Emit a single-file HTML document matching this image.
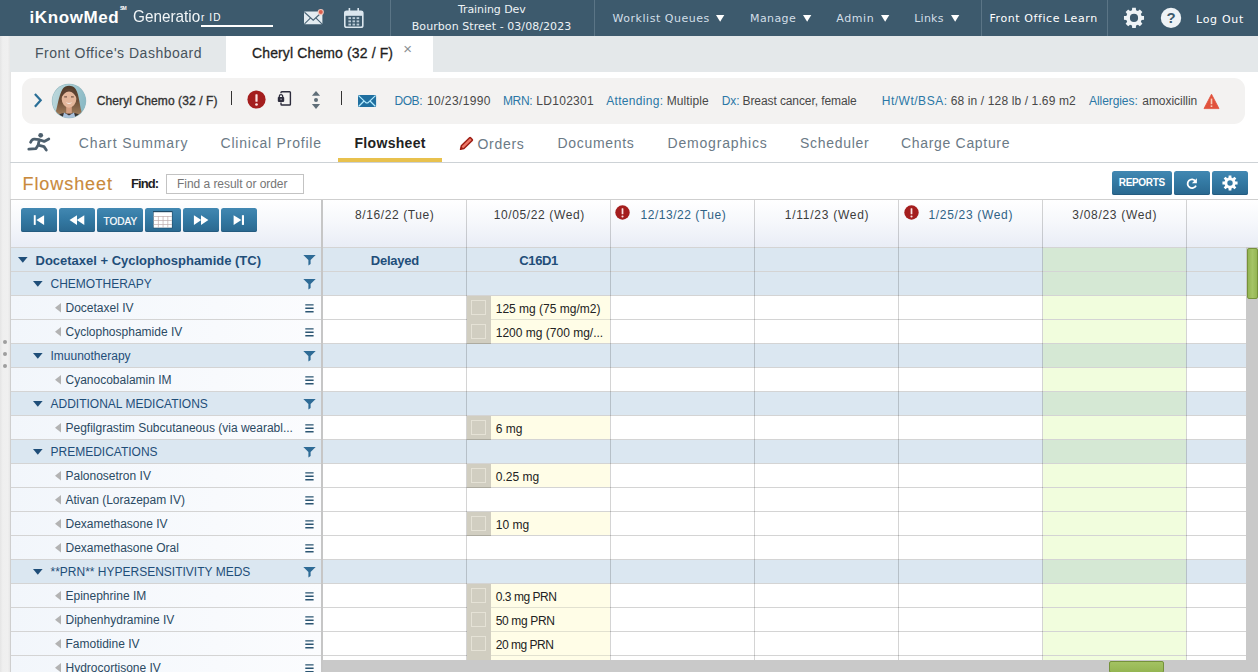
<!DOCTYPE html>
<html lang="en"><head><meta charset="utf-8"><title>iKnowMed Generation 2 - Flowsheet</title>
<style>
html,body{margin:0;padding:0;background:#fff;}
body{width:1258px;height:672px;position:relative;overflow:hidden;font-family:"Liberation Sans",Arial,sans-serif;}
.b{position:absolute;display:block;}
.t{position:absolute;white-space:pre;display:block;}
</style></head>
<body>
<div class="b" style="left:0px;top:0px;width:1258px;height:35.6px;background:#3d5a6d;"></div>
<div class="b" style="left:0px;top:35.6px;width:10.5px;height:637px;background:linear-gradient(90deg,#e5e5e5 0%,#efefef 25%,#f0f0f0 70%,#e3e3e3 100%);"></div>
<div class="b" style="left:10px;top:36px;width:1248px;height:36px;background:#e4e8ea;"></div>
<div class="b" style="left:226px;top:36px;width:207px;height:36px;background:#fff;"></div>
<div class="b" style="left:22px;top:78px;width:1223px;height:46px;background:#f3f2f1;border-radius:11px;"></div>
<div class="b" style="left:10px;top:162px;width:1248px;height:1px;background:#cdd2d6;"></div>
<div class="b" style="left:338px;top:158px;width:104px;height:4px;background:#e8c14e;"></div>
<div class="b" style="left:390px;top:0px;width:1px;height:35.6px;background:#5b7586;"></div>
<div class="b" style="left:593.5px;top:0px;width:1px;height:35.6px;background:#5b7586;"></div>
<div class="b" style="left:980.5px;top:0px;width:1px;height:35.6px;background:#5b7586;"></div>
<div class="b" style="left:1106.5px;top:0px;width:1px;height:35.6px;background:#5b7586;"></div>
<div class="b" style="left:200.5px;top:25px;width:72px;height:2px;background:#fff;"></div>
<div class="b" style="left:133px;top:0;width:67px;height:36px;overflow:hidden"><span class="t" style="left:0;top:5.6px;font:400 17px/22px 'Liberation Sans', Arial, sans-serif;color:#f1f5f7;transform:scaleX(0.9);transform-origin:0 0">Generation</span></div>
<div class="b" style="left:230.5px;top:91px;width:1px;height:14px;background:#333;"></div>
<div class="b" style="left:341px;top:91px;width:1px;height:14px;background:#333;"></div>
<div class="b" style="left:166px;top:174px;width:138px;height:20px;background:#fff;border:1px solid #c3c3c3;box-sizing:border-box;"></div>
<div class="b" style="left:3px;top:340px;width:4px;height:4px;background:#9e9e9e;border-radius:50%;"></div>
<div class="b" style="left:3px;top:352px;width:4px;height:4px;background:#9e9e9e;border-radius:50%;"></div>
<div class="b" style="left:3px;top:364px;width:4px;height:4px;background:#9e9e9e;border-radius:50%;"></div>
<div class="b" style="left:10px;top:199px;width:1248px;height:1px;background:#cfcfcf;"></div>
<div class="b" style="left:10px;top:200px;width:1248px;height:47px;background:linear-gradient(180deg,#ffffff 0%,#f5f7fb 50%,#e9edf6 100%);"></div>
<div class="b" style="left:10px;top:248px;width:311px;height:23px;background:#dbe7f1;"></div>
<div class="b" style="left:323px;top:248px;width:923px;height:23px;background:#dbe7f1;"></div>
<div class="b" style="left:1043px;top:248px;width:143px;height:23px;background:#d5e8d4;"></div>
<svg class="b" style="left:18px;top:257px" width="10" height="6"><path d="M0 0H9.6L4.8 5.8Z" fill="#1f4e79"/></svg>
<svg class="b" style="left:302.5px;top:255px" width="13" height="11"><path d="M0.3 0H12.7L7.6 5V9L5.4 10.4V5Z" fill="#2e6b96"/></svg>
<div class="b" style="left:10px;top:272px;width:311px;height:23px;background:#dbe7f1;"></div>
<div class="b" style="left:323px;top:272px;width:923px;height:23px;background:#dbe7f1;"></div>
<div class="b" style="left:1043px;top:272px;width:143px;height:23px;background:#d5e8d4;"></div>
<svg class="b" style="left:33px;top:281px" width="10" height="6"><path d="M0 0H9.6L4.8 5.8Z" fill="#1f4e79"/></svg>
<svg class="b" style="left:302.5px;top:279px" width="13" height="11"><path d="M0.3 0H12.7L7.6 5V9L5.4 10.4V5Z" fill="#2e6b96"/></svg>
<div class="b" style="left:10px;top:296px;width:311px;height:23px;background:linear-gradient(90deg,#f2f6fb,#fbfcfe);"></div>
<div class="b" style="left:323px;top:296px;width:923px;height:23px;background:#fff;"></div>
<div class="b" style="left:1043px;top:296px;width:143px;height:23px;background:#f1fddd;"></div>
<div class="b" style="left:467px;top:296px;width:24px;height:24px;background:#d1cec1;"></div>
<div class="b" style="left:471px;top:300px;width:15px;height:15px;background:#d1cec1;border:1px solid #e5e2d6;box-sizing:border-box;"></div>
<div class="b" style="left:491px;top:296px;width:119px;height:23px;background:#fffde7;"></div>
<svg class="b" style="left:55px;top:303px" width="6" height="10"><path d="M6 0V9.5L0 4.75Z" fill="#b3b3b3"/></svg>
<svg class="b" style="left:304.5px;top:304px" width="9" height="9"><path d="M0.3 0.2H8.6V1.6H0.3ZM0.3 3.6H8.6V5H0.3ZM0.3 7H8.6V8.4H0.3Z" fill="#2b5572"/></svg>
<div class="b" style="left:10px;top:320px;width:311px;height:23px;background:linear-gradient(90deg,#f2f6fb,#fbfcfe);"></div>
<div class="b" style="left:323px;top:320px;width:923px;height:23px;background:#fff;"></div>
<div class="b" style="left:1043px;top:320px;width:143px;height:23px;background:#f1fddd;"></div>
<div class="b" style="left:467px;top:320px;width:24px;height:24px;background:#d1cec1;"></div>
<div class="b" style="left:471px;top:324px;width:15px;height:15px;background:#d1cec1;border:1px solid #e5e2d6;box-sizing:border-box;"></div>
<div class="b" style="left:491px;top:320px;width:119px;height:23px;background:#fffde7;"></div>
<svg class="b" style="left:55px;top:327px" width="6" height="10"><path d="M6 0V9.5L0 4.75Z" fill="#b3b3b3"/></svg>
<svg class="b" style="left:304.5px;top:328px" width="9" height="9"><path d="M0.3 0.2H8.6V1.6H0.3ZM0.3 3.6H8.6V5H0.3ZM0.3 7H8.6V8.4H0.3Z" fill="#2b5572"/></svg>
<div class="b" style="left:10px;top:344px;width:311px;height:23px;background:#dbe7f1;"></div>
<div class="b" style="left:323px;top:344px;width:923px;height:23px;background:#dbe7f1;"></div>
<div class="b" style="left:1043px;top:344px;width:143px;height:23px;background:#d5e8d4;"></div>
<svg class="b" style="left:33px;top:353px" width="10" height="6"><path d="M0 0H9.6L4.8 5.8Z" fill="#1f4e79"/></svg>
<svg class="b" style="left:302.5px;top:351px" width="13" height="11"><path d="M0.3 0H12.7L7.6 5V9L5.4 10.4V5Z" fill="#2e6b96"/></svg>
<div class="b" style="left:10px;top:368px;width:311px;height:23px;background:linear-gradient(90deg,#f2f6fb,#fbfcfe);"></div>
<div class="b" style="left:323px;top:368px;width:923px;height:23px;background:#fff;"></div>
<div class="b" style="left:1043px;top:368px;width:143px;height:23px;background:#f1fddd;"></div>
<svg class="b" style="left:55px;top:375px" width="6" height="10"><path d="M6 0V9.5L0 4.75Z" fill="#b3b3b3"/></svg>
<svg class="b" style="left:304.5px;top:376px" width="9" height="9"><path d="M0.3 0.2H8.6V1.6H0.3ZM0.3 3.6H8.6V5H0.3ZM0.3 7H8.6V8.4H0.3Z" fill="#2b5572"/></svg>
<div class="b" style="left:10px;top:392px;width:311px;height:23px;background:#dbe7f1;"></div>
<div class="b" style="left:323px;top:392px;width:923px;height:23px;background:#dbe7f1;"></div>
<div class="b" style="left:1043px;top:392px;width:143px;height:23px;background:#d5e8d4;"></div>
<svg class="b" style="left:33px;top:401px" width="10" height="6"><path d="M0 0H9.6L4.8 5.8Z" fill="#1f4e79"/></svg>
<svg class="b" style="left:302.5px;top:399px" width="13" height="11"><path d="M0.3 0H12.7L7.6 5V9L5.4 10.4V5Z" fill="#2e6b96"/></svg>
<div class="b" style="left:10px;top:416px;width:311px;height:23px;background:linear-gradient(90deg,#f2f6fb,#fbfcfe);"></div>
<div class="b" style="left:323px;top:416px;width:923px;height:23px;background:#fff;"></div>
<div class="b" style="left:1043px;top:416px;width:143px;height:23px;background:#f1fddd;"></div>
<div class="b" style="left:467px;top:416px;width:24px;height:24px;background:#d1cec1;"></div>
<div class="b" style="left:471px;top:420px;width:15px;height:15px;background:#d1cec1;border:1px solid #e5e2d6;box-sizing:border-box;"></div>
<div class="b" style="left:491px;top:416px;width:119px;height:23px;background:#fffde7;"></div>
<svg class="b" style="left:55px;top:423px" width="6" height="10"><path d="M6 0V9.5L0 4.75Z" fill="#b3b3b3"/></svg>
<svg class="b" style="left:304.5px;top:424px" width="9" height="9"><path d="M0.3 0.2H8.6V1.6H0.3ZM0.3 3.6H8.6V5H0.3ZM0.3 7H8.6V8.4H0.3Z" fill="#2b5572"/></svg>
<div class="b" style="left:10px;top:440px;width:311px;height:23px;background:#dbe7f1;"></div>
<div class="b" style="left:323px;top:440px;width:923px;height:23px;background:#dbe7f1;"></div>
<div class="b" style="left:1043px;top:440px;width:143px;height:23px;background:#d5e8d4;"></div>
<svg class="b" style="left:33px;top:449px" width="10" height="6"><path d="M0 0H9.6L4.8 5.8Z" fill="#1f4e79"/></svg>
<svg class="b" style="left:302.5px;top:447px" width="13" height="11"><path d="M0.3 0H12.7L7.6 5V9L5.4 10.4V5Z" fill="#2e6b96"/></svg>
<div class="b" style="left:10px;top:464px;width:311px;height:23px;background:linear-gradient(90deg,#f2f6fb,#fbfcfe);"></div>
<div class="b" style="left:323px;top:464px;width:923px;height:23px;background:#fff;"></div>
<div class="b" style="left:1043px;top:464px;width:143px;height:23px;background:#f1fddd;"></div>
<div class="b" style="left:467px;top:464px;width:24px;height:24px;background:#d1cec1;"></div>
<div class="b" style="left:471px;top:468px;width:15px;height:15px;background:#d1cec1;border:1px solid #e5e2d6;box-sizing:border-box;"></div>
<div class="b" style="left:491px;top:464px;width:119px;height:23px;background:#fffde7;"></div>
<svg class="b" style="left:55px;top:471px" width="6" height="10"><path d="M6 0V9.5L0 4.75Z" fill="#b3b3b3"/></svg>
<svg class="b" style="left:304.5px;top:472px" width="9" height="9"><path d="M0.3 0.2H8.6V1.6H0.3ZM0.3 3.6H8.6V5H0.3ZM0.3 7H8.6V8.4H0.3Z" fill="#2b5572"/></svg>
<div class="b" style="left:10px;top:488px;width:311px;height:23px;background:linear-gradient(90deg,#f2f6fb,#fbfcfe);"></div>
<div class="b" style="left:323px;top:488px;width:923px;height:23px;background:#fff;"></div>
<div class="b" style="left:1043px;top:488px;width:143px;height:23px;background:#f1fddd;"></div>
<svg class="b" style="left:55px;top:495px" width="6" height="10"><path d="M6 0V9.5L0 4.75Z" fill="#b3b3b3"/></svg>
<svg class="b" style="left:304.5px;top:496px" width="9" height="9"><path d="M0.3 0.2H8.6V1.6H0.3ZM0.3 3.6H8.6V5H0.3ZM0.3 7H8.6V8.4H0.3Z" fill="#2b5572"/></svg>
<div class="b" style="left:10px;top:512px;width:311px;height:23px;background:linear-gradient(90deg,#f2f6fb,#fbfcfe);"></div>
<div class="b" style="left:323px;top:512px;width:923px;height:23px;background:#fff;"></div>
<div class="b" style="left:1043px;top:512px;width:143px;height:23px;background:#f1fddd;"></div>
<div class="b" style="left:467px;top:512px;width:24px;height:24px;background:#d1cec1;"></div>
<div class="b" style="left:471px;top:516px;width:15px;height:15px;background:#d1cec1;border:1px solid #e5e2d6;box-sizing:border-box;"></div>
<div class="b" style="left:491px;top:512px;width:119px;height:23px;background:#fffde7;"></div>
<svg class="b" style="left:55px;top:519px" width="6" height="10"><path d="M6 0V9.5L0 4.75Z" fill="#b3b3b3"/></svg>
<svg class="b" style="left:304.5px;top:520px" width="9" height="9"><path d="M0.3 0.2H8.6V1.6H0.3ZM0.3 3.6H8.6V5H0.3ZM0.3 7H8.6V8.4H0.3Z" fill="#2b5572"/></svg>
<div class="b" style="left:10px;top:536px;width:311px;height:23px;background:linear-gradient(90deg,#f2f6fb,#fbfcfe);"></div>
<div class="b" style="left:323px;top:536px;width:923px;height:23px;background:#fff;"></div>
<div class="b" style="left:1043px;top:536px;width:143px;height:23px;background:#f1fddd;"></div>
<svg class="b" style="left:55px;top:543px" width="6" height="10"><path d="M6 0V9.5L0 4.75Z" fill="#b3b3b3"/></svg>
<svg class="b" style="left:304.5px;top:544px" width="9" height="9"><path d="M0.3 0.2H8.6V1.6H0.3ZM0.3 3.6H8.6V5H0.3ZM0.3 7H8.6V8.4H0.3Z" fill="#2b5572"/></svg>
<div class="b" style="left:10px;top:560px;width:311px;height:23px;background:#dbe7f1;"></div>
<div class="b" style="left:323px;top:560px;width:923px;height:23px;background:#dbe7f1;"></div>
<div class="b" style="left:1043px;top:560px;width:143px;height:23px;background:#d5e8d4;"></div>
<svg class="b" style="left:33px;top:569px" width="10" height="6"><path d="M0 0H9.6L4.8 5.8Z" fill="#1f4e79"/></svg>
<svg class="b" style="left:302.5px;top:567px" width="13" height="11"><path d="M0.3 0H12.7L7.6 5V9L5.4 10.4V5Z" fill="#2e6b96"/></svg>
<div class="b" style="left:10px;top:584px;width:311px;height:23px;background:linear-gradient(90deg,#f2f6fb,#fbfcfe);"></div>
<div class="b" style="left:323px;top:584px;width:923px;height:23px;background:#fff;"></div>
<div class="b" style="left:1043px;top:584px;width:143px;height:23px;background:#f1fddd;"></div>
<div class="b" style="left:467px;top:584px;width:24px;height:24px;background:#d1cec1;"></div>
<div class="b" style="left:471px;top:588px;width:15px;height:15px;background:#d1cec1;border:1px solid #e5e2d6;box-sizing:border-box;"></div>
<div class="b" style="left:491px;top:584px;width:119px;height:23px;background:#fffde7;"></div>
<svg class="b" style="left:55px;top:591px" width="6" height="10"><path d="M6 0V9.5L0 4.75Z" fill="#b3b3b3"/></svg>
<svg class="b" style="left:304.5px;top:592px" width="9" height="9"><path d="M0.3 0.2H8.6V1.6H0.3ZM0.3 3.6H8.6V5H0.3ZM0.3 7H8.6V8.4H0.3Z" fill="#2b5572"/></svg>
<div class="b" style="left:10px;top:608px;width:311px;height:23px;background:linear-gradient(90deg,#f2f6fb,#fbfcfe);"></div>
<div class="b" style="left:323px;top:608px;width:923px;height:23px;background:#fff;"></div>
<div class="b" style="left:1043px;top:608px;width:143px;height:23px;background:#f1fddd;"></div>
<div class="b" style="left:467px;top:608px;width:24px;height:24px;background:#d1cec1;"></div>
<div class="b" style="left:471px;top:612px;width:15px;height:15px;background:#d1cec1;border:1px solid #e5e2d6;box-sizing:border-box;"></div>
<div class="b" style="left:491px;top:608px;width:119px;height:23px;background:#fffde7;"></div>
<svg class="b" style="left:55px;top:615px" width="6" height="10"><path d="M6 0V9.5L0 4.75Z" fill="#b3b3b3"/></svg>
<svg class="b" style="left:304.5px;top:616px" width="9" height="9"><path d="M0.3 0.2H8.6V1.6H0.3ZM0.3 3.6H8.6V5H0.3ZM0.3 7H8.6V8.4H0.3Z" fill="#2b5572"/></svg>
<div class="b" style="left:10px;top:632px;width:311px;height:23px;background:linear-gradient(90deg,#f2f6fb,#fbfcfe);"></div>
<div class="b" style="left:323px;top:632px;width:923px;height:23px;background:#fff;"></div>
<div class="b" style="left:1043px;top:632px;width:143px;height:23px;background:#f1fddd;"></div>
<div class="b" style="left:467px;top:632px;width:24px;height:24px;background:#d1cec1;"></div>
<div class="b" style="left:471px;top:636px;width:15px;height:15px;background:#d1cec1;border:1px solid #e5e2d6;box-sizing:border-box;"></div>
<div class="b" style="left:491px;top:632px;width:119px;height:23px;background:#fffde7;"></div>
<svg class="b" style="left:55px;top:639px" width="6" height="10"><path d="M6 0V9.5L0 4.75Z" fill="#b3b3b3"/></svg>
<svg class="b" style="left:304.5px;top:640px" width="9" height="9"><path d="M0.3 0.2H8.6V1.6H0.3ZM0.3 3.6H8.6V5H0.3ZM0.3 7H8.6V8.4H0.3Z" fill="#2b5572"/></svg>
<div class="b" style="left:10px;top:656px;width:311px;height:23px;background:linear-gradient(90deg,#f2f6fb,#fbfcfe);"></div>
<div class="b" style="left:323px;top:656px;width:923px;height:23px;background:#fff;"></div>
<div class="b" style="left:1043px;top:656px;width:143px;height:23px;background:#f1fddd;"></div>
<div class="b" style="left:467px;top:656px;width:24px;height:24px;background:#d1cec1;"></div>
<div class="b" style="left:471px;top:660px;width:15px;height:15px;background:#d1cec1;border:1px solid #e5e2d6;box-sizing:border-box;"></div>
<div class="b" style="left:491px;top:656px;width:119px;height:23px;background:#fffde7;"></div>
<svg class="b" style="left:55px;top:663px" width="6" height="10"><path d="M6 0V9.5L0 4.75Z" fill="#b3b3b3"/></svg>
<svg class="b" style="left:304.5px;top:664px" width="9" height="9"><path d="M0.3 0.2H8.6V1.6H0.3ZM0.3 3.6H8.6V5H0.3ZM0.3 7H8.6V8.4H0.3Z" fill="#2b5572"/></svg>
<div class="b" style="left:10px;top:247px;width:1236px;height:1px;background:rgba(0,0,0,0.17);"></div>
<div class="b" style="left:10px;top:271px;width:1236px;height:1px;background:rgba(0,0,0,0.17);"></div>
<div class="b" style="left:10px;top:295px;width:1236px;height:1px;background:rgba(0,0,0,0.17);"></div>
<div class="b" style="left:10px;top:319px;width:1236px;height:1px;background:rgba(0,0,0,0.17);"></div>
<div class="b" style="left:10px;top:343px;width:1236px;height:1px;background:rgba(0,0,0,0.17);"></div>
<div class="b" style="left:10px;top:367px;width:1236px;height:1px;background:rgba(0,0,0,0.17);"></div>
<div class="b" style="left:10px;top:391px;width:1236px;height:1px;background:rgba(0,0,0,0.17);"></div>
<div class="b" style="left:10px;top:415px;width:1236px;height:1px;background:rgba(0,0,0,0.17);"></div>
<div class="b" style="left:10px;top:439px;width:1236px;height:1px;background:rgba(0,0,0,0.17);"></div>
<div class="b" style="left:10px;top:463px;width:1236px;height:1px;background:rgba(0,0,0,0.17);"></div>
<div class="b" style="left:10px;top:487px;width:1236px;height:1px;background:rgba(0,0,0,0.17);"></div>
<div class="b" style="left:10px;top:511px;width:1236px;height:1px;background:rgba(0,0,0,0.17);"></div>
<div class="b" style="left:10px;top:535px;width:1236px;height:1px;background:rgba(0,0,0,0.17);"></div>
<div class="b" style="left:10px;top:559px;width:1236px;height:1px;background:rgba(0,0,0,0.17);"></div>
<div class="b" style="left:10px;top:583px;width:1236px;height:1px;background:rgba(0,0,0,0.17);"></div>
<div class="b" style="left:10px;top:607px;width:1236px;height:1px;background:rgba(0,0,0,0.17);"></div>
<div class="b" style="left:10px;top:631px;width:1236px;height:1px;background:rgba(0,0,0,0.17);"></div>
<div class="b" style="left:10px;top:655px;width:1236px;height:1px;background:rgba(0,0,0,0.17);"></div>
<div class="b" style="left:10px;top:679px;width:1236px;height:1px;background:rgba(0,0,0,0.17);"></div>
<div class="b" style="left:466px;top:200px;width:1px;height:472px;background:rgba(0,0,0,0.17);"></div>
<div class="b" style="left:610px;top:200px;width:1px;height:472px;background:rgba(0,0,0,0.17);"></div>
<div class="b" style="left:754px;top:200px;width:1px;height:472px;background:rgba(0,0,0,0.17);"></div>
<div class="b" style="left:898px;top:200px;width:1px;height:472px;background:rgba(0,0,0,0.17);"></div>
<div class="b" style="left:1042px;top:200px;width:1px;height:472px;background:rgba(0,0,0,0.17);"></div>
<div class="b" style="left:1186px;top:200px;width:1px;height:472px;background:rgba(0,0,0,0.17);"></div>
<div class="b" style="left:467px;top:319px;width:24px;height:1px;background:#d1cec1;"></div>
<div class="b" style="left:491px;top:319px;width:119px;height:1px;background:#e2e1d0;"></div>
<div class="b" style="left:467px;top:607px;width:24px;height:1px;background:#d1cec1;"></div>
<div class="b" style="left:491px;top:607px;width:119px;height:1px;background:#e2e1d0;"></div>
<div class="b" style="left:467px;top:631px;width:24px;height:1px;background:#d1cec1;"></div>
<div class="b" style="left:491px;top:631px;width:119px;height:1px;background:#e2e1d0;"></div>
<div class="b" style="left:467px;top:655px;width:24px;height:1px;background:#d1cec1;"></div>
<div class="b" style="left:491px;top:655px;width:119px;height:1px;background:#e2e1d0;"></div>
<div class="b" style="left:10px;top:199px;width:1px;height:473px;background:#cfcfcf;"></div>
<div class="b" style="left:321px;top:200px;width:2px;height:472px;background:#c6c6c6;"></div>
<div class="b" style="left:323px;top:660px;width:935px;height:12px;background:#c9c9c9;z-index:5;"></div>
<div class="b" style="left:1246px;top:247px;width:12px;height:425px;background:#c9c9c9;z-index:5;"></div>
<div class="b" style="left:1246.5px;top:248px;width:11px;height:50.5px;z-index:6;background:linear-gradient(180deg,#a3c262,#94b552);border:1px solid #75923a;border-radius:2px;box-sizing:border-box;background:linear-gradient(90deg,#94b552,#a5c466 50%,#94b552);"></div>
<div class="b" style="left:1109px;top:660.5px;width:55px;height:12px;z-index:6;background:linear-gradient(180deg,#a3c262,#94b552);border:1px solid #75923a;border-radius:2px;box-sizing:border-box;"></div>
<svg class="b" style="left:300px;top:6px;" width="28" height="22" viewBox="0 0 28 22"><rect x="4" y="5.6" width="18.4" height="12.6" rx="1" fill="#e4ecf1"/><path d="M4.5 6.2L13.2 14.2L21.9 6.2" fill="none" stroke="#4a6577" stroke-width="1.2"/><path d="M4.5 17.8L10.6 11.9M21.9 17.8L15.8 11.9" fill="none" stroke="#4a6577" stroke-width="1.1"/><circle cx="20.8" cy="6.1" r="3.1" fill="#efc3ba"/><circle cx="20.8" cy="6.1" r="2" fill="#da5f4e"/></svg>
<svg class="b" style="left:344px;top:8px;" width="20" height="21" viewBox="0 0 20 21"><rect x="0.8" y="3.3" width="18" height="15.9" rx="1.8" fill="none" stroke="#dbe6ee" stroke-width="1.6"/><rect x="0.8" y="3.2" width="18" height="4.6" fill="#dbe6ee"/><rect x="4.6" y="0" width="1.6" height="5" fill="#dbe6ee"/><rect x="13.4" y="0" width="1.6" height="5" fill="#dbe6ee"/><rect x="4.4" y="9.2" width="2.6" height="1.9" fill="#b9cad6"/><rect x="8.5" y="9.2" width="2.6" height="1.9" fill="#b9cad6"/><rect x="12.6" y="9.2" width="2.6" height="1.9" fill="#b9cad6"/><rect x="4.4" y="12.4" width="2.6" height="1.9" fill="#b9cad6"/><rect x="8.5" y="12.4" width="2.6" height="1.9" fill="#b9cad6"/><rect x="12.6" y="12.4" width="2.6" height="1.9" fill="#b9cad6"/><rect x="4.4" y="15.6" width="2.6" height="1.9" fill="#b9cad6"/><rect x="8.5" y="15.6" width="2.6" height="1.9" fill="#b9cad6"/><rect x="12.6" y="15.6" width="2.6" height="1.9" fill="#b9cad6"/></svg>
<svg class="b" style="left:1122px;top:6px;" width="24" height="24" viewBox="0 0 24 24"><path d="M19.64 9.88L22.03 10.07L22.03 13.73L19.64 13.92L18.83 15.87L20.39 17.70L17.80 20.29L15.97 18.73L14.02 19.54L13.83 21.93L10.17 21.93L9.98 19.54L8.03 18.73L6.20 20.29L3.61 17.70L5.17 15.87L4.36 13.92L1.97 13.73L1.97 10.07L4.36 9.88L5.17 7.93L3.61 6.10L6.20 3.51L8.03 5.07L9.98 4.26L10.17 1.87L13.83 1.87L14.02 4.26L15.97 5.07L17.80 3.51L20.39 6.10L18.83 7.93ZM16.10 11.90A4.1 4.1 0 1 0 7.90 11.90A4.1 4.1 0 1 0 16.10 11.90Z" fill="#eef3f6" fill-rule="evenodd"/></svg>
<svg class="b" style="left:1160px;top:7px;" width="22" height="22" viewBox="0 0 22 22"><circle cx="11" cy="10.9" r="10.2" fill="#eef3f6"/><text x="11" y="16.3" text-anchor="middle" font-family="Liberation Sans, Arial, sans-serif" font-weight="700" font-size="15" fill="#3d5a6d">?</text></svg>
<svg class="b" style="left:716.25px;top:15px;" width="9" height="7" viewBox="0 0 9 7"><path d="M0 0H8.3L4.15 6.7Z" fill="#fff"/></svg>
<svg class="b" style="left:803.25px;top:15px;" width="9" height="7" viewBox="0 0 9 7"><path d="M0 0H8.3L4.15 6.7Z" fill="#fff"/></svg>
<svg class="b" style="left:881.25px;top:15px;" width="9" height="7" viewBox="0 0 9 7"><path d="M0 0H8.3L4.15 6.7Z" fill="#fff"/></svg>
<svg class="b" style="left:951px;top:15px;" width="9" height="7" viewBox="0 0 9 7"><path d="M0 0H8.3L4.15 6.7Z" fill="#fff"/></svg>
<svg class="b" style="left:32px;top:91px;" width="12" height="18" viewBox="0 0 12 18"><path d="M2.9 2.9L8.7 9.3L2.9 15.7" fill="none" stroke="#2a6f97" stroke-width="2.2"/></svg>
<svg class="b" style="left:51px;top:83px;" width="36" height="36" viewBox="0 0 36 36"><defs><clipPath id="av"><circle cx="18" cy="18" r="16.7"/></clipPath><linearGradient id="avbg" x1="0" x2="1" y1="0" y2="0.3"><stop offset="0" stop-color="#c3dcdf"/><stop offset="1" stop-color="#8bbac5"/></linearGradient><linearGradient id="avh" x1="0" x2="0" y1="0" y2="1"><stop offset="0" stop-color="#4e3828"/><stop offset="0.45" stop-color="#6f4f38"/><stop offset="1" stop-color="#b18e69"/></linearGradient><filter id="avb" x="-10%" y="-10%" width="120%" height="120%"><feGaussianBlur stdDeviation="0.55"/></filter></defs><circle cx="18" cy="18" r="17.2" fill="#8fb4bd"/><g clip-path="url(#av)"><rect width="36" height="36" fill="url(#avbg)"/><g filter="url(#avb)"><path d="M3.5 33C6 27 7.6 12 11.6 6C14.6 1.6 21.6 1.6 24.6 6C28.6 12 28.5 25 31.5 31L29 37H6Z" fill="url(#avh)"/><path d="M3 37C5 32.5 9 30.6 13 30H23C27 30.6 31 32.5 33 37Z" fill="#37302f"/><path d="M11 37L13 29.6L18 32.4L23 29.6L25 37Z" fill="#a9c0da"/><rect x="15.2" y="23" width="5.6" height="7.6" fill="#d39f82"/><ellipse cx="18" cy="15.9" rx="7.3" ry="8.8" fill="#e4b69b"/><path d="M10.4 15C10.4 8.4 13.6 5.6 18 5.6C22.4 5.6 25.6 8.4 25.6 15C24 11.6 21.4 8.8 18 8.6C14.6 8.8 12 11.6 10.4 15Z" fill="#5d4230"/><path d="M14.6 19.3Q18 22.6 21.4 19.3Q18 20.6 14.6 19.3Z" fill="#f7eee9"/><rect x="13.2" y="13.4" width="2.8" height="1" fill="#5e4032"/><rect x="20" y="13.4" width="2.8" height="1" fill="#5e4032"/></g></g></svg>
<svg class="b" style="left:245.60000000000002px;top:89.3px;" width="21" height="21" viewBox="0 0 21 21"><circle cx="10.5" cy="10.5" r="9.1" fill="#a41e1e"/><rect x="9.41" y="5.22" width="2.18" height="7.46" rx="0.5" fill="#fbe3e3"/><circle cx="10.5" cy="15.50" r="1.36" fill="#fbe3e3"/></svg>
<svg class="b" style="left:614.4px;top:204.4px;" width="17" height="17" viewBox="0 0 17 17"><circle cx="8.5" cy="8.5" r="7.2" fill="#a41e1e"/><rect x="7.64" y="4.32" width="1.73" height="5.90" rx="0.5" fill="#fbe3e3"/><circle cx="8.5" cy="12.46" r="1.08" fill="#fbe3e3"/></svg>
<svg class="b" style="left:902.5px;top:204.4px;" width="17" height="17" viewBox="0 0 17 17"><circle cx="8.5" cy="8.5" r="7.2" fill="#a41e1e"/><rect x="7.64" y="4.32" width="1.73" height="5.90" rx="0.5" fill="#fbe3e3"/><circle cx="8.5" cy="12.46" r="1.08" fill="#fbe3e3"/></svg>
<svg class="b" style="left:276px;top:89px;" width="18" height="19" viewBox="0 0 18 19"><path d="M5 4.2V3.6Q5 2.8 5.8 2.8H13.6Q14.4 2.8 14.4 3.6V15.2Q14.4 16 13.6 16H5.8Q5 16 5 15.2V13.6" fill="none" stroke="#2d2d3d" stroke-width="1.4"/><rect x="1.8" y="8" width="6.4" height="4.9" rx="0.8" fill="#2d2d3d"/><path d="M3.3 8.2V7.3Q3.3 5.7 5 5.7Q6.7 5.7 6.7 7.3V8.2" fill="none" stroke="#2d2d3d" stroke-width="1.3"/><rect x="4.6" y="9.6" width="0.9" height="1.5" fill="#cfcfd6"/></svg>
<svg class="b" style="left:311px;top:90px;" width="10" height="20" viewBox="0 0 10 20"><path d="M0.9 5.8L5 1L9.1 5.8Z" fill="#5f6e78"/><circle cx="5" cy="9.9" r="2" fill="#5f6e78"/><path d="M0.9 14L5 18.9L9.1 14Z" fill="#5f6e78"/></svg>
<svg class="b" style="left:357px;top:94px;" width="21" height="14" viewBox="0 0 21 14"><rect x="1" y="0.9" width="18.1" height="12" rx="1.2" fill="#1f6f9f"/><path d="M1.6 1.6L8.6 8.4Q10 9.5 11.4 8.4L18.5 1.6" fill="none" stroke="#b4ebff" stroke-width="1.25"/><path d="M1.8 12.2L7 7M18.3 12.2L13 7" fill="none" stroke="#b4ebff" stroke-width="1.25"/></svg>
<svg class="b" style="left:1203px;top:93px;" width="18" height="17" viewBox="0 0 18 17"><path d="M8.5 1.2L16 15.6H1Z" fill="#e1523c" stroke="#e1523c" stroke-width="0.8" stroke-linejoin="round"/><rect x="7.7" y="5.6" width="1.6" height="5.6" fill="#f9cdb9"/><rect x="7.7" y="12.4" width="1.6" height="1.6" fill="#f9cdb9"/></svg>
<svg class="b" style="left:27px;top:132px;" width="24" height="20" viewBox="0 0 24 20"><circle cx="13.7" cy="3.3" r="2.4" fill="#4d5f6d"/><path d="M3.6 10.2Q5 7 7.4 7.2L12.3 7.7L11.2 13.1M12.3 7.7L17.2 9.4L21.8 7M11.2 13.1L17 14.6L19.3 18M11.2 13.1L9 16.6L1.8 17.2" fill="none" stroke="#4d5f6d" stroke-width="2.8" stroke-linecap="round" stroke-linejoin="round"/></svg>
<svg class="b" style="left:458px;top:135px;" width="17" height="17" viewBox="0 0 17 17"><g transform="translate(2.5 14.3) rotate(-44.5)"><path d="M0 0L3 -1.9H14.6Q15.3 -1.9 15.3 -1.2V1.2Q15.3 1.9 14.6 1.9H3Z" fill="#ee7767" stroke="#9c1d13" stroke-width="1.45" stroke-linejoin="round"/><path d="M0 0L2.6 -1.7V1.7Z" fill="#9c1d13"/></g></svg>
<div class="b" style="left:21px;top:208px;width:36px;height:24px;background:linear-gradient(180deg,#4288b2 0%,#347aa4 45%,#2a688f 100%);border-radius:2.5px;box-shadow:inset 0 -1px 0 #255c80;"></div>
<div class="b" style="left:59px;top:208px;width:36px;height:24px;background:linear-gradient(180deg,#4288b2 0%,#347aa4 45%,#2a688f 100%);border-radius:2.5px;box-shadow:inset 0 -1px 0 #255c80;"></div>
<div class="b" style="left:97px;top:208px;width:46px;height:24px;background:linear-gradient(180deg,#4288b2 0%,#347aa4 45%,#2a688f 100%);border-radius:2.5px;box-shadow:inset 0 -1px 0 #255c80;"></div>
<div class="b" style="left:145px;top:208px;width:36px;height:24px;background:linear-gradient(180deg,#4288b2 0%,#347aa4 45%,#2a688f 100%);border-radius:2.5px;box-shadow:inset 0 -1px 0 #255c80;"></div>
<div class="b" style="left:183px;top:208px;width:36px;height:24px;background:linear-gradient(180deg,#4288b2 0%,#347aa4 45%,#2a688f 100%);border-radius:2.5px;box-shadow:inset 0 -1px 0 #255c80;"></div>
<div class="b" style="left:221px;top:208px;width:36px;height:24px;background:linear-gradient(180deg,#4288b2 0%,#347aa4 45%,#2a688f 100%);border-radius:2.5px;box-shadow:inset 0 -1px 0 #255c80;"></div>
<svg class="b" style="left:33px;top:215px;" width="12" height="10" viewBox="0 0 12 10"><rect x="0.8" y="0.2" width="1.9" height="9.7" fill="#fff"/><path d="M11.1 0.2V9.9L3.4 5.05Z" fill="#fff"/></svg>
<svg class="b" style="left:69px;top:215px;" width="16" height="10" viewBox="0 0 16 10"><path d="M8 0.2V9.9L0.5 5.05ZM15.3 0.2V9.9L7.8 5.05Z" fill="#fff"/></svg>
<svg class="b" style="left:193px;top:215px;" width="16" height="10" viewBox="0 0 16 10"><path d="M0.9 0.2V9.9L8.3 5.05ZM8 0.2V9.9L15.4 5.05Z" fill="#fff"/></svg>
<svg class="b" style="left:233px;top:215px;" width="12" height="10" viewBox="0 0 12 10"><path d="M0.6 0.2V9.9L8.4 5.05Z" fill="#fff"/><rect x="8.9" y="0.2" width="2.1" height="9.7" fill="#fff"/></svg>
<svg class="b" style="left:153px;top:211px;" width="20" height="18" viewBox="0 0 20 18"><rect x="0" y="0" width="19.5" height="17.3" fill="#1f4a66"/><rect x="0.6" y="1.2" width="18.3" height="15.5" fill="#fff"/><rect x="4.90" y="5" width="0.7" height="11.7" fill="#bfadad"/><rect x="9.70" y="5" width="0.7" height="11.7" fill="#bfadad"/><rect x="14.50" y="5" width="0.7" height="11.7" fill="#bfadad"/><rect x="0.6" y="5.00" width="18.3" height="0.7" fill="#bfadad"/><rect x="0.6" y="9.00" width="18.3" height="0.7" fill="#bfadad"/><rect x="0.6" y="13.00" width="18.3" height="0.7" fill="#bfadad"/></svg>
<div class="b" style="left:1112px;top:171.4px;width:60px;height:23.4px;background:linear-gradient(180deg,#4288b2 0%,#347aa4 45%,#2a688f 100%);border-radius:2.5px;box-shadow:inset 0 -1px 0 #255c80;"></div>
<div class="b" style="left:1174px;top:171.4px;width:36px;height:23.4px;background:linear-gradient(180deg,#4288b2 0%,#347aa4 45%,#2a688f 100%);border-radius:2.5px;box-shadow:inset 0 -1px 0 #255c80;"></div>
<div class="b" style="left:1212px;top:171.4px;width:36px;height:23.4px;background:linear-gradient(180deg,#4288b2 0%,#347aa4 45%,#2a688f 100%);border-radius:2.5px;box-shadow:inset 0 -1px 0 #255c80;"></div>
<svg class="b" style="left:1185px;top:177px;" width="14" height="14" viewBox="0 0 14 14"><path d="M10.6 4.2A4.4 4.4 0 1 0 11 8.6" fill="none" stroke="#fff" stroke-width="1.8"/><path d="M11.9 1.2V6.2H6.9Z" fill="#fff"/></svg>
<svg class="b" style="left:1221px;top:174.3px;" width="18" height="18" viewBox="0 0 18 18"><path d="M14.41 7.56L16.57 7.62L16.57 10.38L14.41 10.44L13.84 11.81L15.33 13.38L13.38 15.33L11.81 13.84L10.44 14.41L10.38 16.57L7.62 16.57L7.56 14.41L6.19 13.84L4.62 15.33L2.67 13.38L4.16 11.81L3.59 10.44L1.43 10.38L1.43 7.62L3.59 7.56L4.16 6.19L2.67 4.62L4.62 2.67L6.19 4.16L7.56 3.59L7.62 1.43L10.38 1.43L10.44 3.59L11.81 4.16L13.38 2.67L15.33 4.62L13.84 6.19ZM11.70 9.00A2.7 2.7 0 1 0 6.30 9.00A2.7 2.7 0 1 0 11.70 9.00Z" fill="#fff" fill-rule="evenodd"/></svg>
<span class="t " style="left:29.50px;top:7.21px;font:700 17px/22px 'Liberation Sans', Arial, sans-serif;color:#fff;letter-spacing:0.607px;">iKnowMed</span>
<span class="t " style="left:120.00px;top:4.57px;font:700 5px/6px 'Liberation Sans', Arial, sans-serif;color:#fff;letter-spacing:-0.750px;">SM</span>
<span class="t " style="left:201.00px;top:10.79px;font:400 10px/13px 'Liberation Sans', Arial, sans-serif;color:#fff;letter-spacing:1.130px;">r ID</span>
<span class="t " style="left:458.00px;top:3.34px;font:400 11px/14px 'DejaVu Sans', 'Liberation Sans', sans-serif;color:#eef3f6;letter-spacing:-0.082px;">Training Dev</span>
<span class="t " style="left:411.75px;top:20.09px;font:400 11px/14px 'DejaVu Sans', 'Liberation Sans', sans-serif;color:#eef3f6;letter-spacing:0.067px;">Bourbon Street - 03/08/2023</span>
<span class="t " style="left:612.50px;top:12.09px;font:400 11px/14px 'DejaVu Sans', 'Liberation Sans', sans-serif;color:#d3dfe8;letter-spacing:0.527px;">Worklist Queues</span>
<span class="t " style="left:750.00px;top:12.09px;font:400 11px/14px 'DejaVu Sans', 'Liberation Sans', sans-serif;color:#d3dfe8;letter-spacing:0.409px;">Manage</span>
<span class="t " style="left:836.25px;top:12.09px;font:400 11px/14px 'DejaVu Sans', 'Liberation Sans', sans-serif;color:#d3dfe8;letter-spacing:0.609px;">Admin</span>
<span class="t " style="left:914.20px;top:12.09px;font:400 11px/14px 'DejaVu Sans', 'Liberation Sans', sans-serif;color:#d3dfe8;letter-spacing:0.259px;">Links</span>
<span class="t " style="left:989.50px;top:12.09px;font:400 11px/14px 'DejaVu Sans', 'Liberation Sans', sans-serif;color:#fff;letter-spacing:0.578px;">Front Office Learn</span>
<span class="t " style="left:1196.00px;top:13.09px;font:400 11px/14px 'DejaVu Sans', 'Liberation Sans', sans-serif;color:#fff;letter-spacing:0.693px;">Log Out</span>
<span class="t " style="left:35.00px;top:44.15px;font:400 14px/18px 'Liberation Sans', Arial, sans-serif;color:#47535c;letter-spacing:0.503px;">Front Office's Dashboard</span>
<span class="t " style="left:252.00px;top:44.15px;font:400 14px/18px 'Liberation Sans', Arial, sans-serif;color:#1f1f1f;letter-spacing:0.126px;-webkit-text-stroke:0.3px #1f1f1f;">Cheryl Chemo (32 / F)</span>
<span class="t " style="left:403.20px;top:39.10px;font:400 15px/20px 'Liberation Sans', Arial, sans-serif;color:#8a8f93;letter-spacing:0.000px;">×</span>
<span class="t " style="left:96.75px;top:93.34px;font:400 12px/16px 'Liberation Sans', Arial, sans-serif;color:#333;letter-spacing:0.102px;-webkit-text-stroke:0.35px #333;">Cheryl Chemo (32 / F)</span>
<span class="t " style="left:394.50px;top:92.84px;font:400 12px/16px 'Liberation Sans', Arial, sans-serif;color:#2a77a6;letter-spacing:-0.448px;">DOB:</span>
<span class="t " style="left:427.00px;top:92.84px;font:400 12px/16px 'Liberation Sans', Arial, sans-serif;color:#484848;letter-spacing:0.382px;">10/23/1990</span>
<span class="t " style="left:503.00px;top:92.84px;font:400 12px/16px 'Liberation Sans', Arial, sans-serif;color:#2a77a6;letter-spacing:-0.391px;">MRN:</span>
<span class="t " style="left:536.25px;top:92.84px;font:400 12px/16px 'Liberation Sans', Arial, sans-serif;color:#484848;letter-spacing:0.301px;">LD102301</span>
<span class="t " style="left:606.25px;top:92.84px;font:400 12px/16px 'Liberation Sans', Arial, sans-serif;color:#2a77a6;letter-spacing:0.300px;">Attending:</span>
<span class="t " style="left:666.75px;top:92.84px;font:400 12px/16px 'Liberation Sans', Arial, sans-serif;color:#484848;letter-spacing:0.092px;">Multiple</span>
<span class="t " style="left:721.75px;top:92.84px;font:400 12px/16px 'Liberation Sans', Arial, sans-serif;color:#2a77a6;letter-spacing:-0.125px;">Dx:</span>
<span class="t " style="left:742.50px;top:92.84px;font:400 12px/16px 'Liberation Sans', Arial, sans-serif;color:#484848;letter-spacing:-0.091px;">Breast cancer, female</span>
<span class="t " style="left:881.75px;top:92.84px;font:400 12px/16px 'Liberation Sans', Arial, sans-serif;color:#2a77a6;letter-spacing:0.507px;">Ht/Wt/BSA:</span>
<span class="t " style="left:950.75px;top:92.84px;font:400 12px/16px 'Liberation Sans', Arial, sans-serif;color:#484848;letter-spacing:0.126px;">68 in / 128 lb / 1.69 m2</span>
<span class="t " style="left:1089.00px;top:92.84px;font:400 12px/16px 'Liberation Sans', Arial, sans-serif;color:#2a77a6;letter-spacing:-0.068px;">Allergies:</span>
<span class="t " style="left:1142.25px;top:92.84px;font:400 12px/16px 'Liberation Sans', Arial, sans-serif;color:#484848;letter-spacing:-0.036px;">amoxicillin</span>
<span class="t " style="left:78.75px;top:134.15px;font:400 14px/18px 'Liberation Sans', Arial, sans-serif;color:#6b7a86;letter-spacing:0.893px;">Chart Summary</span>
<span class="t " style="left:220.50px;top:134.15px;font:400 14px/18px 'Liberation Sans', Arial, sans-serif;color:#6b7a86;letter-spacing:0.786px;">Clinical Profile</span>
<span class="t " style="left:354.50px;top:134.15px;font:700 14px/18px 'Liberation Sans', Arial, sans-serif;color:#222;letter-spacing:0.316px;">Flowsheet</span>
<span class="t " style="left:477.50px;top:135.15px;font:400 14px/18px 'Liberation Sans', Arial, sans-serif;color:#6b7a86;letter-spacing:0.691px;">Orders</span>
<span class="t " style="left:557.50px;top:134.15px;font:400 14px/18px 'Liberation Sans', Arial, sans-serif;color:#6b7a86;letter-spacing:0.680px;">Documents</span>
<span class="t " style="left:667.50px;top:134.15px;font:400 14px/18px 'Liberation Sans', Arial, sans-serif;color:#6b7a86;letter-spacing:0.817px;">Demographics</span>
<span class="t " style="left:800.00px;top:134.15px;font:400 14px/18px 'Liberation Sans', Arial, sans-serif;color:#6b7a86;letter-spacing:0.713px;">Scheduler</span>
<span class="t " style="left:901.00px;top:134.15px;font:400 14px/18px 'Liberation Sans', Arial, sans-serif;color:#6b7a86;letter-spacing:0.683px;">Charge Capture</span>
<span class="t " style="left:22.50px;top:172.76px;font:400 18px/23px 'Liberation Sans', Arial, sans-serif;color:#c98a3c;letter-spacing:0.932px;-webkit-text-stroke:0.15px #c98a3c;">Flowsheet</span>
<span class="t " style="left:131.00px;top:174.50px;font:700 13px/17px 'Liberation Sans', Arial, sans-serif;color:#222;letter-spacing:-0.941px;">Find:</span>
<span class="t " style="left:177.00px;top:175.84px;font:400 12px/16px 'Liberation Sans', Arial, sans-serif;color:#757575;letter-spacing:-0.042px;">Find a result or order</span>
<span class="t " style="left:1118.80px;top:176.13px;font:700 10px/13px 'Liberation Sans', Arial, sans-serif;color:#fff;letter-spacing:-0.341px;">REPORTS</span>
<span class="t " style="left:103.50px;top:215.34px;font:400 10px/13px 'Liberation Sans', Arial, sans-serif;color:#fff;letter-spacing:0.017px;-webkit-text-stroke:0.2px #fff;">TODAY</span>
<span class="t " style="left:355.00px;top:206.84px;font:400 12px/16px 'Liberation Sans', Arial, sans-serif;color:#3c3c3c;letter-spacing:0.595px;">8/16/22 (Tue)</span>
<span class="t " style="left:493.75px;top:206.84px;font:400 12px/16px 'Liberation Sans', Arial, sans-serif;color:#3c3c3c;letter-spacing:0.615px;">10/05/22 (Wed)</span>
<span class="t " style="left:640.50px;top:206.84px;font:400 12px/16px 'Liberation Sans', Arial, sans-serif;color:#2f6285;letter-spacing:0.536px;">12/13/22 (Tue)</span>
<span class="t " style="left:784.80px;top:206.84px;font:400 12px/16px 'Liberation Sans', Arial, sans-serif;color:#3c3c3c;letter-spacing:0.739px;">1/11/23 (Wed)</span>
<span class="t " style="left:928.50px;top:206.84px;font:400 12px/16px 'Liberation Sans', Arial, sans-serif;color:#2f6285;letter-spacing:0.673px;">1/25/23 (Wed)</span>
<span class="t " style="left:1072.25px;top:206.84px;font:400 12px/16px 'Liberation Sans', Arial, sans-serif;color:#3c3c3c;letter-spacing:0.702px;">3/08/23 (Wed)</span>
<span class="t " style="left:35.50px;top:252.00px;font:700 13px/17px 'Liberation Sans', Arial, sans-serif;color:#1f4e79;letter-spacing:-0.008px;">Docetaxel + Cyclophosphamide (TC)</span>
<span class="t " style="left:50.50px;top:275.84px;font:400 12px/16px 'Liberation Sans', Arial, sans-serif;color:#1f4e79;letter-spacing:0.000px;">CHEMOTHERAPY</span>
<span class="t " style="left:65.50px;top:299.84px;font:400 12px/16px 'Liberation Sans', Arial, sans-serif;color:#2b4a63;letter-spacing:0.000px;">Docetaxel IV</span>
<span class="t v" style="left:495.75px;top:300.84px;font:400 12px/16px 'Liberation Sans', Arial, sans-serif;color:#222;letter-spacing:0.000px;">125 mg (75 mg/m2)</span>
<span class="t " style="left:65.50px;top:323.84px;font:400 12px/16px 'Liberation Sans', Arial, sans-serif;color:#2b4a63;letter-spacing:0.000px;">Cyclophosphamide IV</span>
<span class="t v" style="left:495.75px;top:324.84px;font:400 12px/16px 'Liberation Sans', Arial, sans-serif;color:#222;letter-spacing:0.000px;">1200 mg (700 mg/...</span>
<span class="t " style="left:50.50px;top:347.84px;font:400 12px/16px 'Liberation Sans', Arial, sans-serif;color:#1f4e79;letter-spacing:0.000px;">Imuunotherapy</span>
<span class="t " style="left:65.50px;top:371.84px;font:400 12px/16px 'Liberation Sans', Arial, sans-serif;color:#2b4a63;letter-spacing:0.000px;">Cyanocobalamin IM</span>
<span class="t " style="left:50.50px;top:395.84px;font:400 12px/16px 'Liberation Sans', Arial, sans-serif;color:#1f4e79;letter-spacing:0.000px;">ADDITIONAL MEDICATIONS</span>
<span class="t " style="left:65.50px;top:419.84px;font:400 12px/16px 'Liberation Sans', Arial, sans-serif;color:#2b4a63;letter-spacing:0.000px;">Pegfilgrastim Subcutaneous (via wearabl...</span>
<span class="t v" style="left:495.75px;top:420.84px;font:400 12px/16px 'Liberation Sans', Arial, sans-serif;color:#222;letter-spacing:0.000px;">6 mg</span>
<span class="t " style="left:50.50px;top:443.84px;font:400 12px/16px 'Liberation Sans', Arial, sans-serif;color:#1f4e79;letter-spacing:0.000px;">PREMEDICATIONS</span>
<span class="t " style="left:65.50px;top:467.84px;font:400 12px/16px 'Liberation Sans', Arial, sans-serif;color:#2b4a63;letter-spacing:0.000px;">Palonosetron IV</span>
<span class="t v" style="left:495.75px;top:468.84px;font:400 12px/16px 'Liberation Sans', Arial, sans-serif;color:#222;letter-spacing:0.000px;">0.25 mg</span>
<span class="t " style="left:65.50px;top:491.84px;font:400 12px/16px 'Liberation Sans', Arial, sans-serif;color:#2b4a63;letter-spacing:0.000px;">Ativan (Lorazepam IV)</span>
<span class="t " style="left:65.50px;top:515.84px;font:400 12px/16px 'Liberation Sans', Arial, sans-serif;color:#2b4a63;letter-spacing:0.000px;">Dexamethasone IV</span>
<span class="t v" style="left:495.75px;top:516.84px;font:400 12px/16px 'Liberation Sans', Arial, sans-serif;color:#222;letter-spacing:0.000px;">10 mg</span>
<span class="t " style="left:65.50px;top:539.84px;font:400 12px/16px 'Liberation Sans', Arial, sans-serif;color:#2b4a63;letter-spacing:0.000px;">Dexamethasone Oral</span>
<span class="t " style="left:50.50px;top:563.84px;font:400 12px/16px 'Liberation Sans', Arial, sans-serif;color:#1f4e79;letter-spacing:0.000px;">**PRN** HYPERSENSITIVITY MEDS</span>
<span class="t " style="left:65.50px;top:587.84px;font:400 12px/16px 'Liberation Sans', Arial, sans-serif;color:#2b4a63;letter-spacing:0.000px;">Epinephrine IM</span>
<span class="t v" style="left:495.75px;top:588.84px;font:400 12px/16px 'Liberation Sans', Arial, sans-serif;color:#222;letter-spacing:-0.468px;">0.3 mg PRN</span>
<span class="t " style="left:65.50px;top:611.84px;font:400 12px/16px 'Liberation Sans', Arial, sans-serif;color:#2b4a63;letter-spacing:0.000px;">Diphenhydramine IV</span>
<span class="t v" style="left:495.75px;top:612.84px;font:400 12px/16px 'Liberation Sans', Arial, sans-serif;color:#222;letter-spacing:-0.360px;">50 mg PRN</span>
<span class="t " style="left:65.50px;top:635.84px;font:400 12px/16px 'Liberation Sans', Arial, sans-serif;color:#2b4a63;letter-spacing:0.000px;">Famotidine IV</span>
<span class="t v" style="left:495.75px;top:636.84px;font:400 12px/16px 'Liberation Sans', Arial, sans-serif;color:#222;letter-spacing:-0.485px;">20 mg PRN</span>
<span class="t " style="left:65.50px;top:659.84px;font:400 12px/16px 'Liberation Sans', Arial, sans-serif;color:#2b4a63;letter-spacing:0.000px;">Hydrocortisone IV</span>
<span class="t v" style="left:495.75px;top:660.84px;font:400 12px/16px 'Liberation Sans', Arial, sans-serif;color:#222;letter-spacing:-0.439px;">100 mg PRN</span>
<span class="t " style="left:370.75px;top:252.00px;font:700 13px/17px 'Liberation Sans', Arial, sans-serif;color:#1f4e79;letter-spacing:-0.229px;">Delayed</span>
<span class="t " style="left:519.25px;top:252.00px;font:700 13px/17px 'Liberation Sans', Arial, sans-serif;color:#1f4e79;letter-spacing:-0.367px;">C16D1</span>
</body></html>
